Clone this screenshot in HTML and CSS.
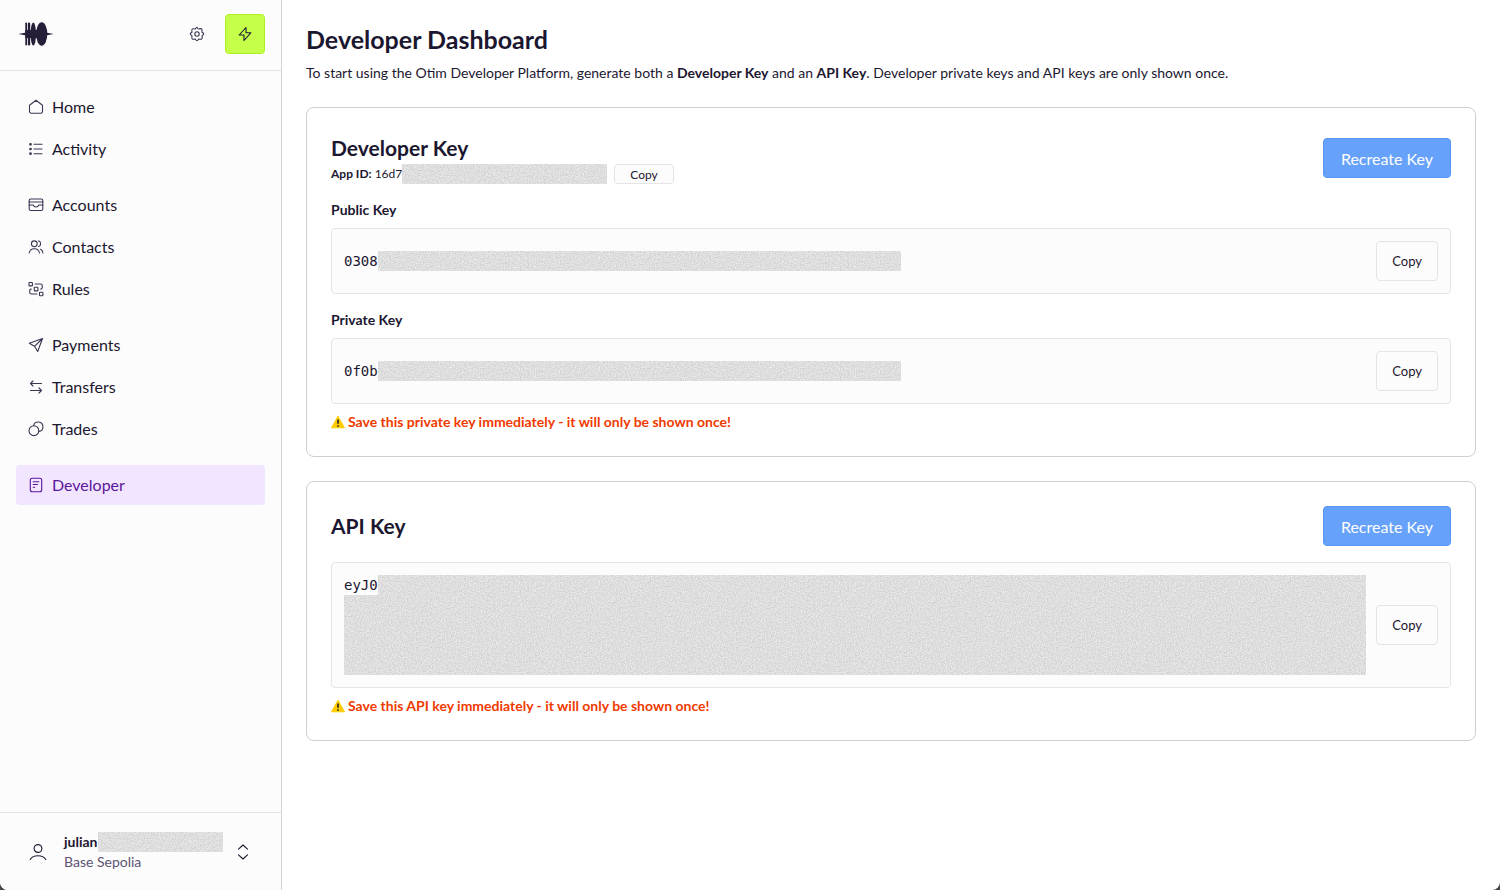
FILE: index.html
```
<!DOCTYPE html>
<html lang="en">
<head>
    <meta charset="UTF-8">
    <meta name="viewport" content="width=device-width, initial-scale=1.0">
    <title>Developer Dashboard</title>
    <link rel="stylesheet" href="styles.css">
</head>
<body>

    <!-- grain used by the .redacted blocks -->
    <svg class="defs" width="0" height="0" aria-hidden="true">
        <filter id="grain" x="0" y="0" width="100%" height="100%" color-interpolation-filters="sRGB">
            <feTurbulence type="fractalNoise" baseFrequency="0.8" numOctaves="2" seed="4"/>
            <feColorMatrix values="0.22 0 0 0 0.76  0.22 0 0 0 0.76  0.22 0 0 0 0.76  0 0 0 0 1"/>
            <feComposite in2="SourceGraphic" operator="in"/>
        </filter>
    </svg>

    <div class="app">
        <aside class="sidebar">
            <div class="sidebar-header">
                <a href="#" class="logo" aria-label="Otim">
                    <svg width="36" height="24" viewBox="0 0 36 24">
                        <path d="M0.500 12 L7 10.700 H29 L35.500 12 L29 13.300 H7 Z"/>
                        <rect x="7.300" y="0.500" width="1.700" height="23" rx="0.800"/>
                        <rect x="9.800" y="0.500" width="2.400" height="23" rx="1.200"/>
                        <ellipse cx="15.300" cy="12" rx="2.700" ry="11.500"/>
                        <ellipse cx="23.700" cy="12" rx="5.600" ry="11.700"/>
                        <path d="M7.300 8h14v8h-14z"/>
                    </svg>
                </a>
                <div class="header-actions">
                    <button class="icon-button" aria-label="Settings">
                        <svg class="icon" width="16" height="16" viewBox="0 0 16 16">
                            <path d="M8 1.200 Q9 3.300 9.700 3 Q12.200 2.200 12.800 3.200 Q13.200 5.800 13 6.300 Q14.800 7.300 14.800 8 Q14.800 8.700 13 9.700 Q13.600 12.200 12.800 12.800 Q12.200 13.500 9.700 13 Q8.700 14.800 8 14.800 Q7.300 14.800 6.300 13 Q3.800 13.500 3.200 12.800 Q2.500 12.200 3 9.700 Q1.200 8.700 1.200 8 Q1.200 7.300 3 6.300 Q2.500 3.800 3.200 3.200 Q3.800 2.500 6.300 3 Q7.300 1.200 8 1.200 Z"/>
                            <circle cx="8" cy="8" r="2.200"/>
                        </svg>
                    </button>
                    <button class="quick-button" aria-label="Quick actions">
                        <svg class="icon" width="16" height="16" viewBox="0 0 16 16">
                            <path d="M9 1.500 L2.200 9 H7 V14.500 L13.800 6.800 H9 Z"/>
                        </svg>
                    </button>
                </div>
            </div>

            <nav class="nav">
                <div class="nav-group">
                    <a href="#" class="nav-item">
                        <svg class="icon" width="16" height="16" viewBox="0 0 16 16"><path d="M1.500 6.200 L8 1.300 L14.500 6.200 V12.500 a1.700 1.700 0 0 1 -1.700 1.700 H3.200 a1.700 1.700 0 0 1 -1.700 -1.700 Z"/></svg>
                        Home
                    </a>
                    <a href="#" class="nav-item">
                        <svg class="icon" width="16" height="16" viewBox="0 0 16 16"><path d="M6 3.300h8M6 8h8M6 12.700h8"/><g fill="currentColor"><circle cx="2.500" cy="3.300" r="0.800"/><circle cx="2.500" cy="8" r="0.800"/><circle cx="2.500" cy="12.700" r="0.800"/></g></svg>
                        Activity
                    </a>
                </div>
                <div class="nav-group">
                    <a href="#" class="nav-item">
                        <svg class="icon" width="16" height="16" viewBox="0 0 16 16"><rect x="1.200" y="2" width="13.600" height="11.500" rx="1.500"/><path d="M1.200 5h13.600M1.200 8h4c.4 1.300 1.400 2 2.800 2s2.400-.7 2.800-2h4"/></svg>
                        Accounts
                    </a>
                    <a href="#" class="nav-item">
                        <svg class="icon" width="16" height="16" viewBox="0 0 16 16"><circle cx="6.300" cy="4.800" r="2.900"/><path d="M1.200 14c.4-2.700 2.300-4.200 5.100-4.200s4.700 1.500 5.100 4.200M10.600 1.900c2.700.7 2.700 4.800 0 5.600M12.600 10.200c1.400.7 2.100 2 2.300 3.800"/></svg>
                        Contacts
                    </a>
                    <a href="#" class="nav-item">
                        <svg class="icon" width="16" height="16" viewBox="0 0 16 16"><rect x="1" y="1.500" width="3.400" height="3.400" rx=".5"/><rect x="6.300" y="6.300" width="3.600" height="3.600" rx=".5"/><rect x="11.500" y="11.300" width="3.400" height="3.400" rx=".5"/><path d="M7 3h5.500a1.800 1.800 0 0 1 1.800 1.800V6.500a1.600 1.600 0 0 1-1.600 1.600M9 13H3.500a1.800 1.800 0 0 1-1.800-1.800V9.700a1.600 1.600 0 0 1 1.600-1.600"/></svg>
                        Rules
                    </a>
                </div>
                <div class="nav-group">
                    <a href="#" class="nav-item">
                        <svg class="icon" width="16" height="16" viewBox="0 0 16 16"><path d="M14.500 1.500 L1.300 6.300 L6.500 9.300 L9.700 14.500 Z M14.500 1.500 L6.500 9.300"/></svg>
                        Payments
                    </a>
                    <a href="#" class="nav-item">
                        <svg class="icon" width="16" height="16" viewBox="0 0 16 16"><path d="M13.500 4.500H2.500M5 2L2.500 4.500L5 7M2.500 11.500H13.500M11 9L13.500 11.500L11 14"/></svg>
                        Transfers
                    </a>
                    <a href="#" class="nav-item">
                        <svg class="icon" width="16" height="16" viewBox="0 0 16 16"><circle cx="5.900" cy="9.700" r="4.900"/><path d="M5.600 4.800a4.700 4.700 0 1 1 5.200 5.600"/></svg>
                        Trades
                    </a>
                </div>
                <div class="nav-group">
                    <a href="#" class="nav-item active" aria-current="page">
                        <svg class="icon" width="16" height="16" viewBox="0 0 16 16"><rect x="2.300" y="1.200" width="11.400" height="13.600" rx="2"/><path d="M5.200 4.700h5.600M5.200 7.500h4.300M5.200 10.300h1.500"/></svg>
                        Developer
                    </a>
                </div>
            </nav>

            <button class="account">
                <svg class="icon avatar" width="20" height="20" viewBox="0 0 20 20"><circle cx="10" cy="6.500" r="3.900"/><path d="M2.200 17.500c1.600-2.600 4.400-3.700 7.800-3.700s6.200 1.100 7.800 3.700"/></svg>
                <span class="account-text">
                    <span class="account-name">julian<span class="redacted redacted-name"></span></span>
                    <span class="account-network">Base Sepolia</span>
                </span>
                <svg class="icon" width="16" height="16" viewBox="0 0 16 16"><path d="M3.500 5.200 L8 1 L12.500 5.200 M3.500 10.800 L8 15 L12.500 10.800"/></svg>
            </button>
        </aside>

        <main class="main">
            <header class="page-header">
                <h1>Developer Dashboard</h1>
                <p>To start using the Otim Developer Platform, generate both a <strong>Developer Key</strong> and an <strong>API Key</strong>. Developer private keys and API keys are only shown once.</p>
            </header>

            <section class="card">
                <div class="card-header">
                    <div>
                        <h2>Developer Key</h2>
                        <div class="app-id">
                            <strong>App ID:</strong>
                            <span class="app-id-value">16d7<span class="redacted redacted-id"></span></span>
                            <button class="copy copy-small">Copy</button>
                        </div>
                    </div>
                    <button class="primary">Recreate Key</button>
                </div>
                <h3>Public Key</h3>
                <div class="key-box">
                    <code class="key">0308<span class="redacted redacted-key"></span></code>
                    <button class="copy">Copy</button>
                </div>
                <h3>Private Key</h3>
                <div class="key-box">
                    <code class="key">0f0b<span class="redacted redacted-key"></span></code>
                    <button class="copy">Copy</button>
                </div>
                <p class="warning">
                    <svg width="14" height="14" viewBox="0 0 14 14" aria-hidden="true"><path d="M7 1.200 L13.500 12.800 H0.500 Z" fill="#fc0" stroke="#fc0" stroke-linejoin="round"/><path d="M7 4.500v4.300M7 10.300v1.500" stroke="#222" stroke-width="1.600"/></svg>
                    Save this private key immediately - it will only be shown once!
                </p>
            </section>

            <section class="card">
                <div class="card-header">
                    <h2>API Key</h2>
                    <button class="primary">Recreate Key</button>
                </div>
                <div class="key-box">
                    <code class="key-long">
                        <span class="key">eyJ0<span class="redacted redacted-fill"></span></span>
                        <span class="redacted redacted-block"></span>
                    </code>
                    <button class="copy">Copy</button>
                </div>
                <p class="warning">
                    <svg width="14" height="14" viewBox="0 0 14 14" aria-hidden="true"><path d="M7 1.200 L13.500 12.800 H0.500 Z" fill="#fc0" stroke="#fc0" stroke-linejoin="round"/><path d="M7 4.500v4.300M7 10.300v1.500" stroke="#222" stroke-width="1.600"/></svg>
                    Save this API key immediately - it will only be shown once!
                </p>
            </section>
        </main>
    </div>

</body>
</html>
```
FILE: styles.css
```
* { box-sizing: border-box; }
html { background: #444; }
body { margin: 0; font-family: Lato, sans-serif; font-size: 14px; line-height: 20px; color: #1c1730; }
h1, h2, h3, p { margin: 0; }
a { color: inherit; text-decoration: none; }
button { font-family: inherit; color: inherit; cursor: pointer; }
.defs { position: absolute; }
.icon { flex: none; fill: none; stroke: currentColor; stroke-width: 1.1; stroke-linecap: round; stroke-linejoin: round; }

.app { display: flex; min-height: 100vh; background: #fff; border-radius: 0 0 8px 8px; overflow: hidden; }

/* Sidebar */
.sidebar { display: flex; flex-direction: column; flex: none; width: 282px; background: #fcfcfc; border-right: 1px solid #d4d4d4; }
.sidebar-header { display: flex; align-items: center; justify-content: space-between; height: 71px; padding: 0 16px 2px 18px; border-bottom: 1px solid #e2e2e2; }
.logo { display: flex; fill: #261d38; }
.header-actions { display: flex; gap: 8px; }
.icon-button, .quick-button { display: flex; align-items: center; justify-content: center; width: 40px; height: 40px; padding: 0; border: 1px solid transparent; border-radius: 4px; background: none; }
.icon-button { color: #3d3552; }
.quick-button { background: #c6ff4a; border-color: #aef01e; }

.nav { display: flex; flex-direction: column; gap: 16px; flex: 1; padding: 16px; }
.nav-group { display: flex; flex-direction: column; gap: 2px; }
.nav-item { display: flex; align-items: center; gap: 8px; height: 40px; padding: 0 12px; border-radius: 4px; font-size: 16px; }
.nav-item .icon { color: #3d3552; }
.nav-item.active, .nav-item.active .icon { color: #5b179b; }
.nav-item.active { background: #f1e5ff; }

.account { display: flex; align-items: center; gap: 12px; height: 78px; padding: 0 30px 0 28px; border: 0; border-top: 1px solid #e2e2e2; background: none; text-align: left; }
.avatar { margin-right: 4px; }
.account-text { display: flex; flex-direction: column; flex: 1; font-size: 14px; line-height: 20px; }
.account-name { display: flex; font-weight: 700; }
.account-network { color: #5d5275; }

/* Blanked out values */
.redacted { display: block; height: 20px; background: #ddd; filter: url(#grain); }
.redacted-name { flex: 1; }
.redacted-id { width: 205px; }
.redacted-key { flex: 0 1 523px; }
.redacted-fill { flex: 1; }
.redacted-block { height: 80px; }

/* Main */
.main { flex: 1; min-width: 0; padding: 23px 24px 24px; }
.page-header { margin-bottom: 24px; }
h1 { margin-bottom: 8px; font-size: 25px; line-height: 32px; }
.page-header p { font-size: 14px; }
h2 { font-size: 21px; line-height: 32px; }
h3 { margin: 16px 0 8px; font-size: 14px; line-height: 20px; }

.card { padding: 24px; border: 1px solid #cfcfcf; border-radius: 8px; }
.card + .card { margin-top: 24px; }
.card-header { display: flex; align-items: center; justify-content: space-between; }
.card-header + .key-box { margin-top: 16px; }
.app-id { display: flex; align-items: center; gap: 3px; font-size: 12px; }
.app-id-value { display: flex; margin-right: 4px; }

.primary { height: 40px; padding: 0 17px; border: 1px solid #5596f5; border-radius: 4px; background: #66a2fb; color: #fff; font-size: 16px; }
.copy { flex: none; height: 40px; padding: 0 15px; border: 1px solid #e4e4e4; border-radius: 4px; background: #fcfcfc; font-size: 13px; }
.copy-small { height: 20px; font-size: 12px; }

.key-box { display: flex; align-items: center; justify-content: space-between; gap: 10px; padding: 12px; border: 1px solid #e4e4e4; border-radius: 4px; background: #fcfcfc; }
.key, .key-long { flex: 1; min-width: 0; font-family: "DejaVu Sans Mono", monospace; font-size: 14px; line-height: 20px; }
.key { display: flex; }
.key-long { display: block; }

.warning { display: flex; align-items: center; gap: 3px; margin-top: 8px; color: #f03a00; font-size: 14px; font-weight: 700; }
```
